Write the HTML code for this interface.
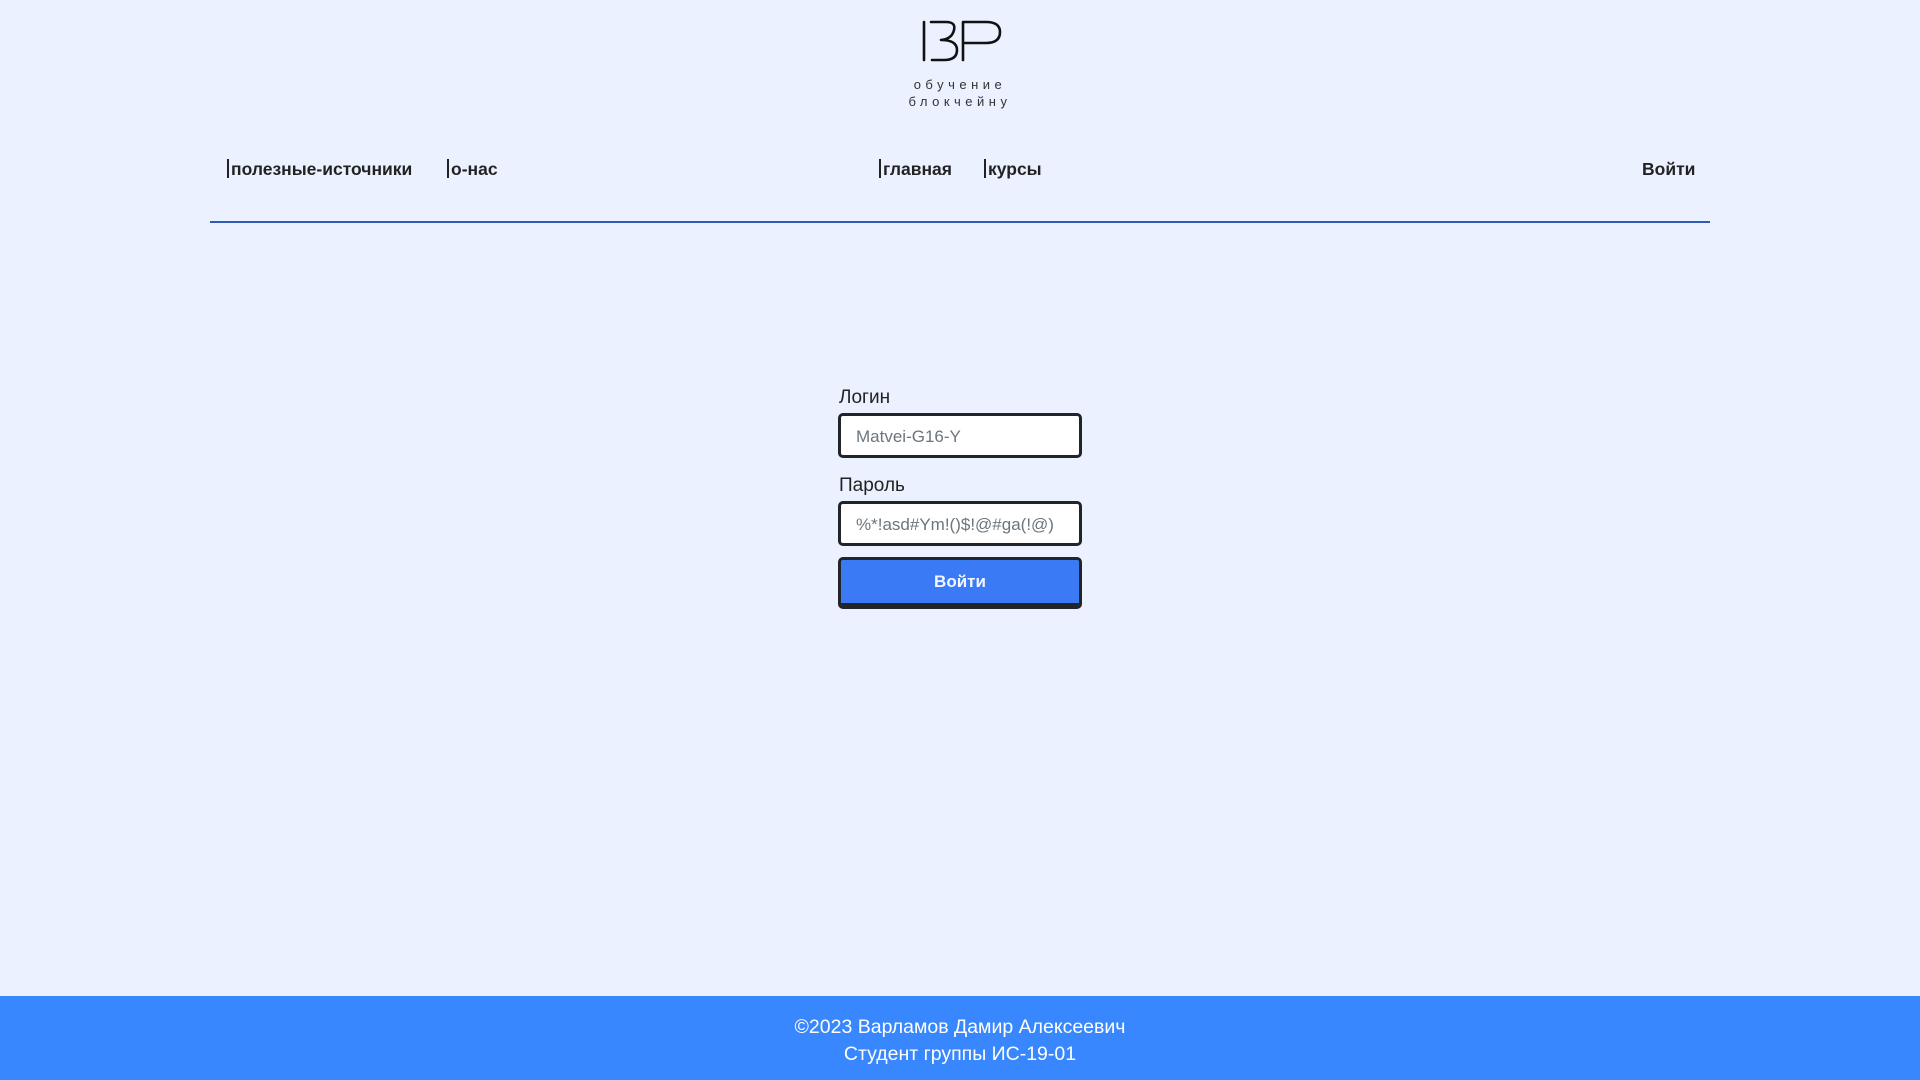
<!DOCTYPE html>
<html><head><meta charset="utf-8"><style>
body{margin:0;width:1920px;height:1080px;background:#ebf1ff;font-family:"Liberation Sans",sans-serif;position:relative;overflow:hidden;color:#212529}
.abs{position:absolute}
.sub{left:0;width:1920px;text-align:center;font-size:13px;letter-spacing:4.5px;color:#333}
.nav{top:159px;font-size:17.5px;font-weight:bold;color:#222}
.nav b{display:inline-block;width:2px;height:19px;background:#222;vertical-align:-3px;margin-right:2px}
.line{left:210px;width:1500px;top:221px;height:2px;background:#2f5bb8}
.lbl{font-size:19px;color:#222;left:839px}
.inp{left:838px;width:238px;height:39px;border:3px solid #212529;border-radius:5px;background:#fff;font-size:17px;color:#6c757d;box-sizing:content-box}
.inp span{position:absolute;left:15px;top:11px}
.btn{left:838px;top:557px;width:238px;height:43px;background:#3b7af5;border:3px solid #212529;border-bottom-width:6px;border-radius:5px;color:#f3f6ff;font-weight:bold;font-size:17px;text-align:center;line-height:43px}
.foot{left:0;top:996px;width:1920px;height:84px;background:#3887fe;color:#fff;font-size:19.5px;text-align:center;line-height:27px;padding-top:18px;box-sizing:border-box}
</style></head><body>
<svg class="abs" style="left:920px;top:18px" width="84" height="46" viewBox="0 0 84 46" fill="none" stroke="#111" stroke-width="2.6" stroke-linecap="round" stroke-linejoin="round">
<path d="M4,4 V42"/>
<path d="M11,4 H26 Q36,4 34,12 Q32,21 21,22 Q37,22 37,32 Q37,42 24,42 H12"/>
<path d="M43,42 V4 H66 Q80,4 80,14 Q80,25 66,25 H45"/>
</svg>
<div class="abs sub" style="top:77px">обучение</div>
<div class="abs sub" style="top:94px">блокчейну</div>
<div class="abs nav" style="left:227px"><b></b>полезные-источники</div>
<div class="abs nav" style="left:447px"><b></b>о-нас</div>
<div class="abs nav" style="left:879px"><b></b>главная</div>
<div class="abs nav" style="left:984px"><b></b>курсы</div>
<div class="abs nav" style="left:1642px">Войти</div>
<div class="abs line"></div>
<div class="abs lbl" style="top:387px">Логин</div>
<div class="abs inp" style="top:413px"><span>Matvei-G16-Y</span></div>
<div class="abs lbl" style="top:475px">Пароль</div>
<div class="abs inp" style="top:501px"><span>%*!asd#Ym!()$!@#ga(!@)</span></div>
<div class="abs btn">Войти</div>
<div class="abs foot">©2023 Варламов Дамир Алексеевич<br>Студент группы ИС-19-01</div>
</body></html>
